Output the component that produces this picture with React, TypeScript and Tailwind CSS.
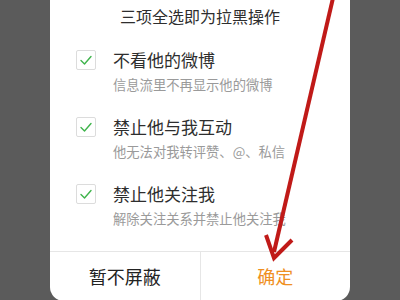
import React from "react";

const Check = () => (
  <div className="w-[20px] h-[20px] border border-[#dcdcdc] rounded-[2px] flex items-center justify-center shrink-0 bg-white">
    <svg width="14" height="14" viewBox="0 0 14 14" fill="none">
      <polyline points="2,7.5 5.5,11 12,3.5" stroke="#3fb44c" strokeWidth="1.4" strokeLinecap="round" strokeLinejoin="round" />
    </svg>
  </div>
);

const Item = ({ title, sub, className }: { title: string; sub: string; className?: string }) => (
  <div className={"flex flex-row gap-[17px] pl-[26px] " + (className ?? "")}>
    <Check />
    <div className="flex flex-col">
      <div className="text-[17px] leading-[20px] text-[#2e2e2e]">{title}</div>
      <div className="text-[13.3px] leading-[20px] mt-[5px] text-[#9a9a9a] whitespace-nowrap">{sub}</div>
    </div>
  </div>
);

export default function App() {
  return (
    <div
      className="relative w-[400px] h-[300px] bg-[#5b5b5b] flex justify-center overflow-hidden"
      style={{ fontFamily: '"Noto Sans CJK SC", "Noto Sans", sans-serif' }}
    >
      <div className="w-[300px] h-[301px] bg-white rounded-b-[14px] flex flex-col overflow-hidden">
        <div className="h-[32px] leading-[32px] text-center text-[16px] text-[#2e2e2e]">三项全选即为拉黑操作</div>
        <Item className="mt-[18px]" title="不看他的微博" sub="信息流里不再显示他的微博" />
        <Item className="mt-[22px]" title="禁止他与我互动" sub="他无法对我转评赞、@、私信" />
        <Item className="mt-[22px]" title="禁止他关注我" sub="解除关注关系并禁止他关注我" />
        <div className="mt-[22px] flex-1 border-t border-[#e6e6e6] flex flex-row">
          <div className="flex-1 flex items-center justify-center text-[18px] text-[#222222] border-r border-[#e6e6e6]">暂不屏蔽</div>
          <div className="flex-1 flex items-center justify-center text-[18px] text-[#ef8f22]">确定</div>
        </div>
      </div>
      <svg className="absolute left-0 top-0 pointer-events-none" width="400" height="300" viewBox="0 0 400 300">
        <line x1="333" y1="-2" x2="274" y2="252" stroke="#c01a18" strokeWidth="4" />
        <polyline points="266,235 274,258 292,240" stroke="#c01a18" strokeWidth="4" fill="none" strokeLinejoin="miter" />
      </svg>
    </div>
  );
}
